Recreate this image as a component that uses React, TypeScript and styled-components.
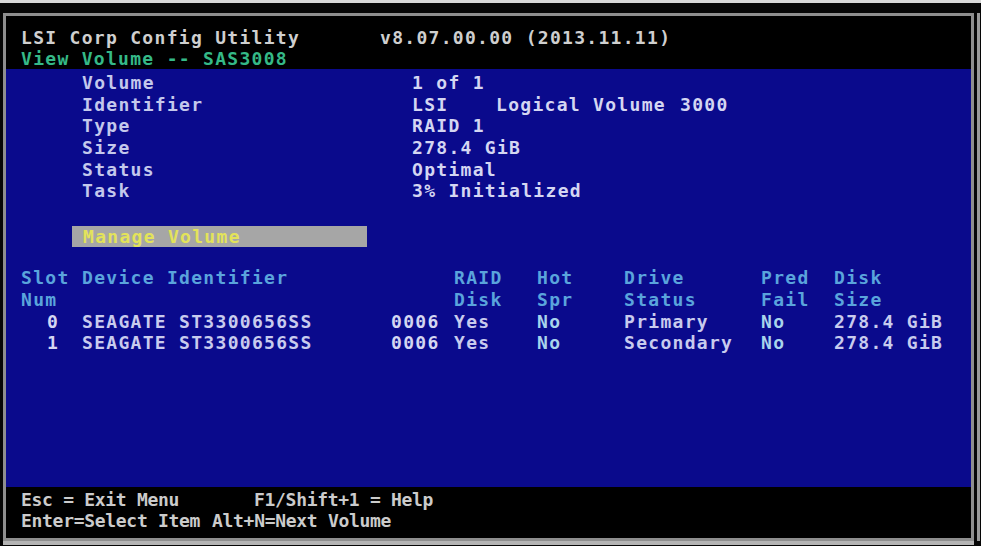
import React from 'react';
import styled, { createGlobalStyle } from 'styled-components';

const GlobalStyle = createGlobalStyle`
  html, body {
    margin: 0;
    padding: 0;
    background: #060606;
  }
  body {
    width: 981px;
    height: 546px;
    overflow: hidden;
  }
`;

const colors = {
  bezel: '#060606',
  frame: '#8e8e8e',
  bright: '#cfcfcf',
  green: '#35b987',
  blue: '#0a0a8c',
  label: '#c4c8ec',
  value: '#d4d6f2',
  menuBar: '#a6a6a6',
  menuText: '#e3e35a',
  heading: '#5aa4dc',
  row: '#c8cbee',
  cyan: '#a8d4ec',
  footer: '#cbcbcb',
};

const Screen = styled.div`
  box-sizing: border-box;
  width: 981px;
  height: 546px;
  border-top: 3px solid #d9d9d9;
  padding: 10px 0 0 3px;
  background: ${colors.bezel};
  font-family: 'DejaVu Sans Mono', 'Liberation Mono', monospace;
  font-size: 18px;
  font-weight: bold;
  letter-spacing: 1.3px;
  white-space: pre;
`;

const Frame = styled.div`
  box-sizing: border-box;
  width: 971px;
  height: 528px;
  border: 3px solid ${colors.frame};
  display: flex;
  flex-direction: column;
  background: #000;
  box-shadow: 3px 0 0 0 ${colors.bezel}, 6px 0 0 0 #9a9a9a, 0 4px 0 0 #b4b4b4;
`;

const TitleBar = styled.header`
  height: 53px;
  box-sizing: border-box;
  padding: 11px 0 0 15px;
  background: #000;
`;

const Line = styled.div<{ $cols?: string; $height?: number }>`
  display: grid;
  grid-template-columns: ${({ $cols }) => $cols || '1fr'};
  height: ${({ $height }) => $height || 21}px;
  line-height: ${({ $height }) => $height || 21}px;
`;

const Text = styled.span<{ $color: string }>`
  color: ${({ $color }) => $color};
`;

const Body = styled.main`
  flex: 1;
  box-sizing: border-box;
  padding: 3px 0 0 15px;
  background: ${colors.blue};
`;

const Details = styled.div`
  padding-left: 61px;
`;

const DetailRow = styled.div`
  display: grid;
  grid-template-columns: 330px 1fr;
  height: 21.7px;
  line-height: 21.7px;
`;

const Label = styled.span`
  color: ${colors.label};
`;

const Value = styled.span`
  display: grid;
  grid-template-columns: 84px 184px auto;
  color: ${colors.value};
`;

const MenuBar = styled.div`
  margin: 24px 0 0 51px;
  width: 295px;
  height: 21px;
  box-sizing: border-box;
  padding-left: 11px;
  line-height: 21px;
  background: ${colors.menuBar};
  color: ${colors.menuText};
`;

const Table = styled.div`
  margin-top: 20px;
  display: grid;
  grid-template-columns: 61px 309px 63px 83px 87px 137px 73px 1fr;
  grid-auto-rows: 21.7px;
  line-height: 21.7px;
`;

const Cell = styled.span<{ $color?: string; $span?: number; $indent?: number }>`
  color: ${({ $color }) => $color || colors.row};
  grid-column: span ${({ $span }) => $span || 1};
  padding-left: ${({ $indent }) => $indent || 0}px;
`;

const Footer = styled.footer`
  height: 51px;
  box-sizing: border-box;
  padding: 2px 0 0 15px;
  background: #000;
  color: ${colors.footer};
  letter-spacing: -0.3px;
`;

const details: { label: string; value: string[] }[] = [
  { label: 'Volume', value: ['1 of 1'] },
  { label: 'Identifier', value: ['LSI', 'Logical Volume', '3000'] },
  { label: 'Type', value: ['RAID 1'] },
  { label: 'Size', value: ['278.4 GiB'] },
  { label: 'Status', value: ['Optimal'] },
  { label: 'Task', value: ['3% Initialized'] },
];

const headRows = [
  ['Slot', 'Device Identifier', 'RAID', 'Hot', 'Drive', 'Pred', 'Disk'],
  ['Num', '', 'Disk', 'Spr', 'Status', 'Fail', 'Size'],
];

const disks = [
  { slot: '0', name: 'SEAGATE ST3300656SS', rev: '0006', raid: 'Yes', hot: 'No', status: 'Primary', pred: 'No', size: '278.4 GiB' },
  { slot: '1', name: 'SEAGATE ST3300656SS', rev: '0006', raid: 'Yes', hot: 'No', status: 'Secondary', pred: 'No', size: '278.4 GiB' },
];

export default function App() {
  return (
    <>
      <GlobalStyle />
      <Screen>
        <Frame>
          <TitleBar>
            <Line $cols="359px 1fr">
              <Text $color={colors.bright}>LSI Corp Config Utility</Text>
              <Text $color={colors.bright}>v8.07.00.00 (2013.11.11)</Text>
            </Line>
            <Line>
              <Text $color={colors.green}>View Volume -- SAS3008</Text>
            </Line>
          </TitleBar>

          <Body>
            <Details>
              {details.map((d) => (
                <DetailRow key={d.label}>
                  <Label>{d.label}</Label>
                  <Value>
                    {d.value.map((v) => (
                      <span key={v}>{v}</span>
                    ))}
                  </Value>
                </DetailRow>
              ))}
            </Details>

            <MenuBar>Manage Volume</MenuBar>

            <Table>
              {headRows.map((row, i) => (
                <React.Fragment key={i}>
                  {row.map((h, j) => (
                    <Cell key={j} $color={colors.heading} $span={j === 1 ? 2 : 1}>
                      {h}
                    </Cell>
                  ))}
                </React.Fragment>
              ))}
              {disks.map((d) => (
                <React.Fragment key={d.slot}>
                  <Cell $indent={26} $color={colors.value}>{d.slot}</Cell>
                  <Cell>{d.name}</Cell>
                  <Cell $color={colors.value}>{d.rev}</Cell>
                  <Cell>{d.raid}</Cell>
                  <Cell $color={colors.cyan}>{d.hot}</Cell>
                  <Cell>{d.status}</Cell>
                  <Cell $color={colors.cyan}>{d.pred}</Cell>
                  <Cell>{d.size}</Cell>
                </React.Fragment>
              ))}
            </Table>
          </Body>

          <Footer>
            <Line $cols="233px 1fr">
              <span>Esc = Exit Menu</span>
              <span>F1/Shift+1 = Help</span>
            </Line>
            <Line $cols="191px 1fr">
              <span>Enter=Select Item</span>
              <span>Alt+N=Next Volume</span>
            </Line>
          </Footer>
        </Frame>
      </Screen>
    </>
  );
}
